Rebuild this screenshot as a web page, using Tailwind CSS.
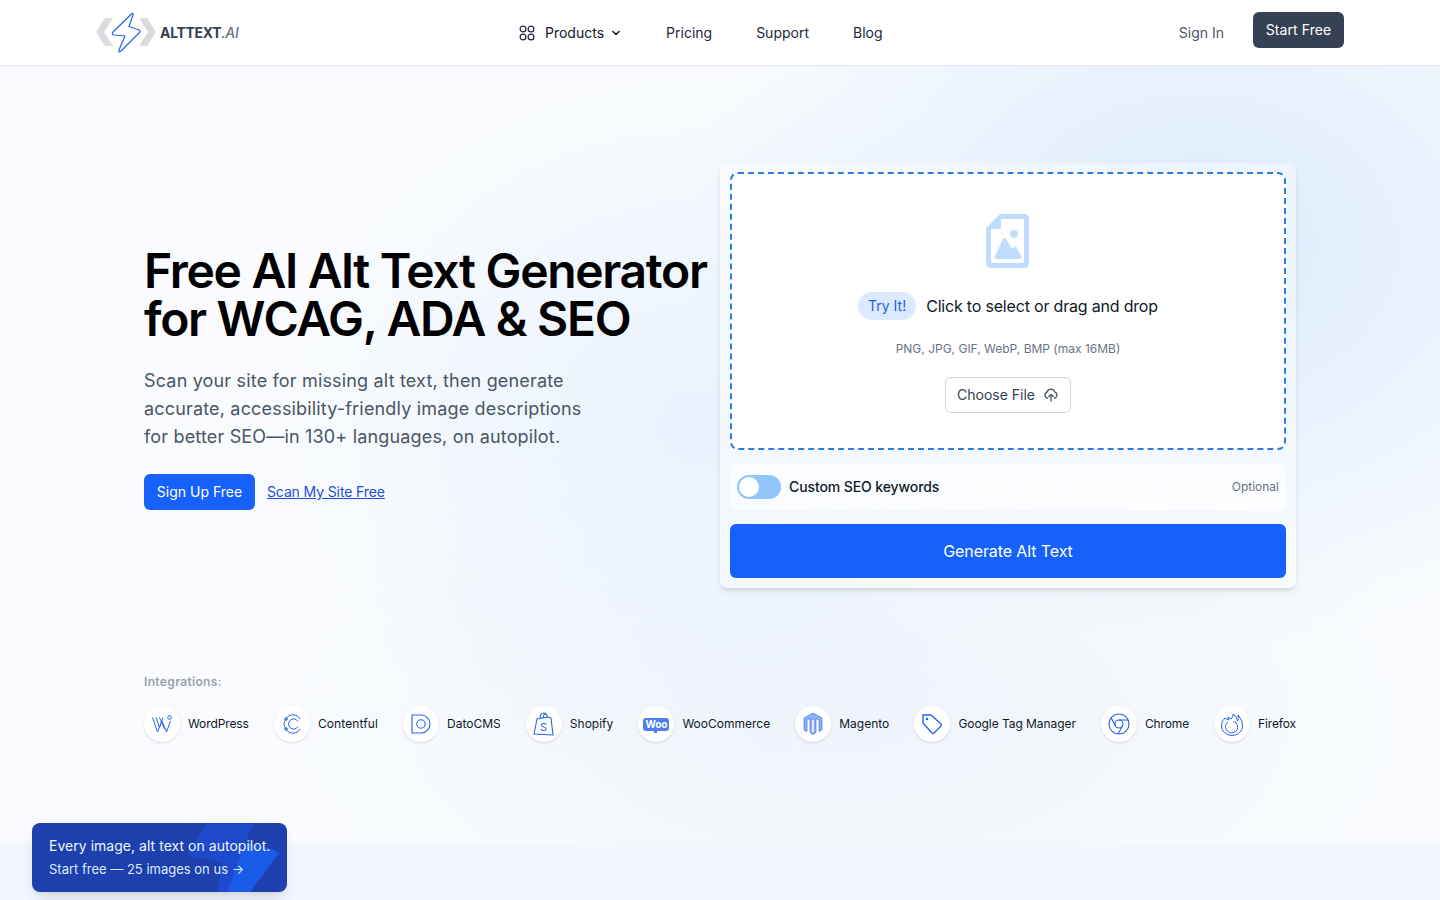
<!DOCTYPE html>
<html lang="en">

<head>
    <meta charset="UTF-8">
    <meta name="viewport" content="width=device-width, initial-scale=1.0">
    <title>AltText.ai</title>
    <script src="https://cdn.jsdelivr.net/npm/@tailwindcss/browser@4"></script>
</head>

<body class="h-[900px] overflow-hidden bg-[#f9fbfe] font-['Inter',sans-serif] text-gray-900">

    <!-- Navbar -->
    <nav class="relative z-10 h-[66px] bg-white border-b border-gray-200 flex items-center pl-[96px] pr-[96px]">
        <a href="#" class="flex items-center w-[423px] shrink-0">
            <svg class="w-[60px] h-[42px]" viewBox="0 0 60 42" fill="none">
                <path fill="#d9dbdf" d="M9 6 H17 L8 20 L17 34 H9 L1 21.5 Q0.5 20 1 18.5 Z M43 6 H51 L59 18.5 Q59.5 20 59 21.5 L51 34 H43 L52 20 Z" />
                <path d="M36 1.5 Q37.5 1 37 3 L33 14.5 L43 18 Q45 19 43 21 L25 39 Q22 41 23 38 L29 24 L18 23 Q15 22 17 20 Z" fill="white" stroke="#2563eb" stroke-width="1.2" stroke-linejoin="round" />
            </svg>
            <span class="ml-[4px] text-[14px] font-bold tracking-[-0.3px] text-gray-700">ALTTEXT<span class="italic font-medium text-gray-500">.AI</span></span>
        </a>
        <div class="flex items-center text-sm text-gray-800">
            <a href="#" class="flex items-center text-gray-900 mr-[44px]">
                <svg class="w-4 h-4 mr-[10px]" viewBox="0 0 16 16" fill="none" stroke="#1f2937" stroke-width="1.2">
                    <circle cx="4" cy="4" r="2.9" /><circle cx="12" cy="4" r="2.9" /><circle cx="4" cy="12" r="2.9" /><circle cx="12" cy="12" r="2.9" />
                </svg>
                Products
                <svg class="w-3 h-3 ml-[6px]" viewBox="0 0 12 12" fill="none" stroke="#111827" stroke-width="1.5" stroke-linecap="round" stroke-linejoin="round"><path d="M3 4.5 L6 7.5 L9 4.5" /></svg>
            </a>
            <a href="#" class="mr-[44px]">Pricing</a>
            <a href="#" class="mr-[44px]">Support</a>
            <a href="#">Blog</a>
        </div>
        <div class="ml-auto flex items-center">
            <a href="#" class="text-sm text-gray-600 mr-[29px]">Sign In</a>
            <a href="#" class="mb-[6px] h-9 w-[91px] flex items-center justify-center rounded-md bg-gray-700 text-sm tracking-[0.1px] text-white">Start Free</a>
        </div>
    </nav>

    <main class="relative h-[834px] overflow-hidden bg-[radial-gradient(ellipse_520px_400px_at_1200px_180px,#dcebfc,transparent),radial-gradient(ellipse_420px_360px_at_700px_360px,#e9f2fd,transparent),radial-gradient(ellipse_600px_300px_at_850px_650px,#eff4fb,transparent)]">
        <div class="mx-auto w-[1152px] pt-[97px]">
            <!-- Hero -->
            <section class="flex h-[425px]">
                <div class="w-[576px] shrink-0 pt-[84px]">
                    <h1 class="w-[580px] text-[48px] leading-[48px] font-semibold tracking-[-1.32px] text-black">Free AI Alt Text Generator for WCAG, ADA &amp; SEO</h1>
                    <p class="mt-[24px] w-[460px] text-lg leading-7 tracking-[0.17px] text-gray-600">Scan your site for missing alt text, then generate accurate, accessibility-friendly image descriptions for better SEO—in 130+ languages, on autopilot.</p>
                    <div class="mt-[23px] flex items-center">
                        <a href="#" class="h-9 w-[111px] flex items-center justify-center rounded-md bg-[#1660fb] text-sm text-white">Sign Up Free</a>
                        <a href="#" class="ml-3 text-sm tracking-[-0.12px] text-[#1d4ed8] underline">Scan My Site Free</a>
                    </div>
                </div>

                <!-- Upload card -->
                <div class="w-[576px] shrink-0 rounded-lg bg-white/40 p-[9px_10px_10px] shadow-md">
                    <div class="h-[278px] rounded-lg border-2 border-dashed border-[#2f7ae5] bg-white flex flex-col items-center pt-[40px]">
                        <svg class="w-[44px] h-[54px]" viewBox="0 0 44 54">
                            <path fill-rule="evenodd" fill="#bfdbfe" d="M14 0 H38 Q43 0 43 5 V49 Q43 54 38 54 H5 Q0 54 0 49 V14 Z M15 5 V15 H5 V48 Q5 49 6 49 H37 Q38 49 38 48 V6 Q38 5 37 5 Z" />
                            <circle cx="28" cy="20" r="4" fill="#bfdbfe" />
                            <path fill="#bfdbfe" d="M17 25 L9 42 Q8 45 11 45 H33 Q36 45 35 42 L30 32 L26 35 L20 25 Q18 23 17 25 Z" />
                        </svg>
                        <div class="mt-[24px] flex items-center">
                            <span class="h-7 w-[58px] flex items-center justify-center rounded-full bg-[#dbeafe] text-sm text-[#1d5fe6]">Try It!</span>
                            <span class="ml-[10px] text-base tracking-[-0.19px] text-gray-900">Click to select or drag and drop</span>
                        </div>
                        <p class="mt-[21px] text-xs text-gray-500">PNG, JPG, GIF, WebP, BMP (max 16MB)</p>
                        <button class="mt-[20px] h-9 w-[126px] flex items-center justify-center rounded-md border border-gray-300 bg-white text-sm text-gray-700">
                            Choose File
                            <svg class="w-4 h-4 ml-2" viewBox="0 0 16 16" fill="none" stroke="#4b5563" stroke-width="1.3" stroke-linecap="round" stroke-linejoin="round"><path d="M4.5 11 A3 3 0 0 1 4 5.2 A4 4 0 0 1 11.8 5.2 A3 3 0 0 1 11.5 11 M8 14 V7.5 M5.8 9.5 L8 7.5 L10.2 9.5" /></svg>
                        </button>
                    </div>
                    <div class="mt-[14px] h-[46px] rounded-md bg-white/60 flex items-center px-[7px]">
                        <span class="relative w-[44px] h-6 rounded-full bg-[#93c5fd]">
                            <span class="absolute left-[2px] top-[2px] w-5 h-5 rounded-full bg-white"></span>
                        </span>
                        <span class="ml-2 text-sm font-medium tracking-[-0.1px] text-gray-900">Custom SEO keywords</span>
                        <span class="ml-auto text-xs text-gray-500">Optional</span>
                    </div>
                    <button class="mt-[14px] w-full h-[54px] rounded-md bg-[#1660fb] text-base tracking-[-0.1px] text-white">Generate Alt Text</button>
                </div>
            </section>

            <!-- Integrations -->
            <p class="mt-[86px] text-xs font-semibold tracking-[0.35px] text-gray-400">Integrations:</p>
            <div class="mt-[16px] flex items-center justify-between text-xs text-gray-900">
                <div class="flex items-center gap-2 tracking-[-0.1px]">
                    <span class="w-9 h-9 rounded-full bg-white shadow-sm flex items-center justify-center">
                        <svg class="w-5 h-5" viewBox="0 0 20 20" fill="none" stroke="#2563eb" stroke-width="1"><path d="M0.5 3.5 L5.5 18 L10 7 L14.5 18 L18.5 7 M4 3.5 L7.5 13.5 L11 3.5 M7.5 3.5 L12.5 15" /><circle cx="17.5" cy="3.5" r="1.8" /></svg>
                    </span>
                    WordPress
                </div>
                <div class="flex items-center gap-2 tracking-[0.1px]">
                    <span class="w-9 h-9 rounded-full bg-white shadow-sm flex items-center justify-center">
                        <svg class="w-5 h-5" viewBox="0 0 20 20" fill="none" stroke="#2563eb" stroke-width="1"><path d="M18 5 A8 8 0 0 0 4 5 A8 8 0 0 0 4 15 A8 8 0 0 0 18 15" /><path d="M16 7.5 A5 5 0 0 0 7 8 A5 5 0 0 0 7 12 A5 5 0 0 0 16 12.5" /><circle cx="4" cy="5" r="1.3" /><circle cx="4" cy="15" r="1.3" /></svg>
                    </span>
                    Contentful
                </div>
                <div class="flex items-center gap-2">
                    <span class="w-9 h-9 rounded-full bg-white shadow-sm flex items-center justify-center">
                        <svg class="w-5 h-5" viewBox="0 0 20 20" fill="none" stroke="#2563eb" stroke-width="1.1"><path d="M1 1 H10 A9 9 0 0 1 10 19 H1 Z" /><circle cx="10" cy="10" r="4.2" /></svg>
                    </span>
                    DatoCMS
                </div>
                <div class="flex items-center gap-2">
                    <span class="w-9 h-9 rounded-full bg-white shadow-sm flex items-center justify-center">
                        <svg class="w-[22px] h-[24px]" viewBox="0 0 22 24" fill="none" stroke="#2563eb" stroke-width="1.1" stroke-linejoin="round"><path d="M4 7 L1 22 L20 23 L18 6 L15 5 Z M7 6.5 Q7 1 11 1 Q14 1 14 5 M10 6 Q10 2 13 2" /><text x="7" y="19" font-size="11" fill="#2563eb" stroke="none" font-family="Inter, sans-serif">S</text></svg>
                    </span>
                    Shopify
                </div>
                <div class="flex items-center gap-2">
                    <span class="w-9 h-9 rounded-full bg-white shadow-sm flex items-center justify-center">
                        <span class="relative w-[26px] h-[13px] rounded-[3px] bg-[#4f7ee8] flex items-center justify-center text-[10px] leading-none font-bold text-white tracking-[-0.2px]">Woo<span class="absolute left-[11px] top-[12px] w-[3px] h-[3px] bg-[#4f7ee8]"></span></span>
                    </span>
                    WooCommerce
                </div>
                <div class="flex items-center gap-2">
                    <span class="w-9 h-9 rounded-full bg-white shadow-sm flex items-center justify-center">
                        <svg class="w-5 h-6" viewBox="0 0 20 24"><path fill="#8fb0f5" stroke="#2563eb" stroke-width="0.6" d="M10 1 L19 6 V18 L16 19.5 V8 L13 6.5 V20.5 L10 22.5 L7 20.5 V6.5 L4 8 V19.5 L1 18 V6 Z" /><path fill="#fff" d="M9.3 8 H10.7 V20 H9.3 Z" /></svg>
                    </span>
                    Magento
                </div>
                <div class="flex items-center gap-2 tracking-[-0.06px]">
                    <span class="w-9 h-9 rounded-full bg-white shadow-sm flex items-center justify-center">
                        <svg class="w-[22px] h-[22px]" viewBox="0 0 22 22" fill="none" stroke="#2563eb" stroke-width="1.4" stroke-linejoin="round"><path d="M2 2 H10 L20 11 Q21 12 20 13 L13 20 Q12 21 11 20 L2 10 Z" /><circle cx="6" cy="6" r="0.6" fill="#2563eb" /></svg>
                    </span>
                    Google Tag Manager
                </div>
                <div class="flex items-center gap-2 tracking-[-0.15px]">
                    <span class="w-9 h-9 rounded-full bg-white shadow-sm flex items-center justify-center">
                        <svg class="w-[22px] h-[22px]" viewBox="0 0 22 22" fill="none" stroke="#2563eb" stroke-width="1.1"><circle cx="11" cy="11" r="10" /><circle cx="11" cy="11" r="4" /><path d="M11 7 H20 M7.5 13 L3 4.5 M14.5 13 L10 21" /></svg>
                    </span>
                    Chrome
                </div>
                <div class="flex items-center gap-2 tracking-[-0.15px]">
                    <span class="w-9 h-9 rounded-full bg-white shadow-sm flex items-center justify-center">
                        <svg class="w-[24px] h-[24px]" viewBox="0 0 24 24" fill="none" stroke="#2563eb" stroke-width="1" stroke-linejoin="round"><path d="M5 6 Q1 9 1.5 14 A10.5 9.5 0 0 0 22.5 14 Q23 8 18 3 Q19 7 17.5 9 Q17 4 13 2 Q13.5 5 11 7 L8 5 L8.5 8 Z" /><path d="M8 10 A6 6 0 1 0 17.5 13.5 Q17 10 13 9.5" /></svg>
                    </span>
                    Firefox
                </div>
            </div>
        </div>

        <!-- Bottom band -->
        <div class="absolute left-0 right-0 top-[777px] h-[57px] bg-[#f2f7fe]"></div>

        <!-- Promo -->
        <a href="#" class="absolute left-[32px] top-[757px] w-[255px] h-[69px] rounded-lg overflow-hidden bg-[#1e40af] shadow-lg block">
            <svg class="absolute inset-0 w-full h-full" viewBox="0 0 255 69" fill="none">
                <path d="M175 0 H222 L213 20 L247 28 Q249 30 246 33 L218 69 H185 L190 40 L155 32 Z" fill="#1d4ed8" fill-opacity="0.65" />
                <path d="M213 20 L240 26 Q247 28 244 33 L218 69 H195 Z" fill="#1a5be8" />
            </svg>
            <span class="relative block pl-[17px] pt-[14px] text-sm leading-[18px] tracking-[0.03px] text-[#eff6ff]">Every image, alt text on autopilot.</span>
            <span class="relative block pl-[17px] mt-[5px] text-[13px] leading-[18px] text-[#dbeafe]">Start free — 25 images on us →</span>
        </a>
    </main>

</body>

</html>
